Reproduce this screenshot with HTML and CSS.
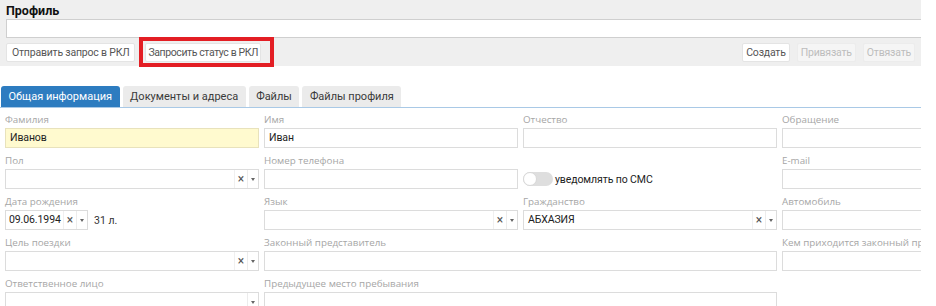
FILE: index.html
```html
<!DOCTYPE html>
<html lang="ru">
<head>
<meta charset="utf-8">
<title>Профиль</title>
<link rel="stylesheet" href="styles.css">
</head>
<body>
<div class="page">
  <div class="header">
    <h1 class="title">Профиль</h1>
    <div class="search"></div>
    <div class="toolbar">
      <div class="group">
        <button class="btn">Отправить запрос в РКЛ</button>
        <span class="highlight"><button class="btn">Запросить статус в РКЛ</button></span>
      </div>
      <div class="group right">
        <button class="btn">Создать</button>
        <button class="btn disabled">Привязать</button>
        <button class="btn disabled">Отвязать</button>
      </div>
    </div>
  </div>

  <div class="tabs">
    <div class="tab active">Общая информация</div>
    <div class="tab">Документы и адреса</div>
    <div class="tab">Файлы</div>
    <div class="tab">Файлы профиля</div>
  </div>

  <div class="form">
    <div class="field">
      <div class="label">Фамилия</div>
      <div class="input required">Иванов</div>
    </div>
    <div class="field">
      <div class="label">Имя</div>
      <div class="input">Иван</div>
    </div>
    <div class="field">
      <div class="label">Отчество</div>
      <div class="input"></div>
    </div>
    <div class="field">
      <div class="label">Обращение</div>
      <div class="input"></div>
    </div>

    <div class="field">
      <div class="label">Пол</div>
      <div class="select"><span class="value"></span><span class="clear">×</span><span class="caret"></span></div>
    </div>
    <div class="field">
      <div class="label">Номер телефона</div>
      <div class="input"></div>
    </div>
    <div class="field">
      <div class="label"></div>
      <div class="toggle-row"><span class="toggle"><span class="knob"></span></span><span class="toggle-text">уведомлять по СМС</span></div>
    </div>
    <div class="field">
      <div class="label">E-mail</div>
      <div class="input"></div>
    </div>

    <div class="field">
      <div class="label">Дата рождения</div>
      <div class="date-row">
        <div class="select date"><span class="value">09.06.1994</span><span class="clear">×</span><span class="caret"></span></div>
        <span class="age">31 л.</span>
      </div>
    </div>
    <div class="field">
      <div class="label">Язык</div>
      <div class="select"><span class="value"></span><span class="clear">×</span><span class="caret"></span></div>
    </div>
    <div class="field">
      <div class="label">Гражданство</div>
      <div class="select"><span class="value">АБХАЗИЯ</span><span class="clear">×</span><span class="caret"></span></div>
    </div>
    <div class="field">
      <div class="label">Автомобиль</div>
      <div class="input"></div>
    </div>

    <div class="field">
      <div class="label">Цель поездки</div>
      <div class="select"><span class="value"></span><span class="clear">×</span><span class="caret"></span></div>
    </div>
    <div class="field span2">
      <div class="label">Законный представитель</div>
      <div class="input"></div>
    </div>
    <div class="field">
      <div class="label nowrap">Кем приходится законный представитель</div>
      <div class="input"></div>
    </div>

    <div class="field">
      <div class="label">Ответственное лицо</div>
      <div class="select"><span class="value"></span><span class="caret"></span></div>
    </div>
    <div class="field span2">
      <div class="label">Предыдущее место пребывания</div>
      <div class="input"></div>
    </div>
  </div>
</div>
</body>
</html>
```
FILE: styles.css
```css
* { box-sizing: border-box; }

body {
  margin: 0;
  background: #fff;
  font-family: Roboto, "Open Sans", sans-serif;
  color: #222;
}

.page {
  width: 921px;
  overflow: hidden;
}

.header {
  background: #efefef;
  height: 66px;
  padding: 2px 0 0 6px;
}

.title {
  margin: 0;
  font-size: 12.5px;
  font-weight: 700;
  line-height: 17px;
  height: 17px;
  color: #111;
}

.search {
  height: 19px;
  background: #fff;
  border: 1px solid #cfcfcf;
  border-right: none;
}

.toolbar {
  display: flex;
  justify-content: space-between;
  align-items: center;
  margin-top: -1px;
  padding-right: 6px;
  height: 30px;
}

.group {
  display: flex;
  align-items: center;
  gap: 4px;
}

.group.right { gap: 7px; }

.btn {
  height: 19px;
  padding: 0 5px;
  background: #fff;
  border: 1px solid #e4e4e4;
  border-radius: 2px;
  font-family: inherit;
  font-size: 10.5px;
  letter-spacing: -0.2px;
  color: #555;
  line-height: 17px;
}

.group.right .btn { padding: 0 3px; }

.btn.disabled {
  background: #f5f5f5;
  border-color: #ececec;
  color: #bdbdbd;
}

.highlight {
  display: inline-flex;
  border: 4px solid #e31e24;
  padding: 2px 9px 1px 2px;
}

.highlight .btn {
  padding: 0 2px;
  letter-spacing: -0.4px;
}

.tabs {
  display: flex;
  gap: 3px;
  margin-top: 20px;
  padding-left: 1px;
  height: 22px;
  border-bottom: 1px solid #a9c9e6;
}

.tab {
  height: 21px;
  padding: 0 7.5px;
  background: #ebebeb;
  border-radius: 3px 3px 0 0;
  font-size: 11px;
  line-height: 21px;
  color: #3a3a3a;
}

.tab.active {
  background: #2d7cc0;
  color: #fff;
}

.form {
  display: grid;
  grid-template-columns: repeat(4, 254px);
  column-gap: 5px;
  row-gap: 6px;
  padding: 5px 0 0 5px;
}

.span2 { grid-column: span 2; }

.label {
  height: 14px;
  margin-bottom: 1px;
  font-family: "Open Sans", sans-serif;
  font-size: 9.8px;
  line-height: 14px;
  color: #a6a6a6;
}

.label.nowrap { white-space: nowrap; }

.input,
.select {
  height: 20px;
  border: 1px solid #dcdcdc;
  background: #fff;
  font-size: 10.5px;
  letter-spacing: -0.1px;
  line-height: 18px;
  color: #222;
}

.input { padding: 0 4px; }

.input.required {
  background: #fffacf;
  border-color: #e8e2bc;
}

.select {
  display: flex;
}

.select .value {
  flex: 1;
  padding: 0 4px;
  white-space: nowrap;
  overflow: hidden;
}

.select.date .value { padding: 0 0 0 3px; }

.select .clear {
  width: 13px;
  text-align: center;
  font-size: 12px;
  color: #555;
  border-left: 1px solid #f0f0f0;
}

.select .caret {
  width: 11px;
  border-left: 1px solid #ececec;
  display: flex;
  align-items: center;
  justify-content: center;
}

.select .caret::after {
  content: "";
  border-left: 2.5px solid transparent;
  border-right: 2.5px solid transparent;
  border-top: 3px solid #666;
}

.date-row {
  display: flex;
  align-items: center;
}

.select.date { width: 83px; }

.age {
  margin-left: 6px;
  font-size: 10.5px;
  color: #333;
}

.toggle-row {
  display: flex;
  align-items: center;
  height: 20px;
}

.toggle {
  width: 30px;
  height: 14px;
  border-radius: 7px;
  background: #dedede;
  position: relative;
  margin-right: 2px;
}

.knob {
  position: absolute;
  left: 0;
  top: 0;
  width: 14px;
  height: 14px;
  border-radius: 50%;
  background: #fff;
  border: 1px solid #d8d8d8;
}

.toggle-text {
  font-size: 10.5px;
  letter-spacing: -0.1px;
  color: #222;
}
```
